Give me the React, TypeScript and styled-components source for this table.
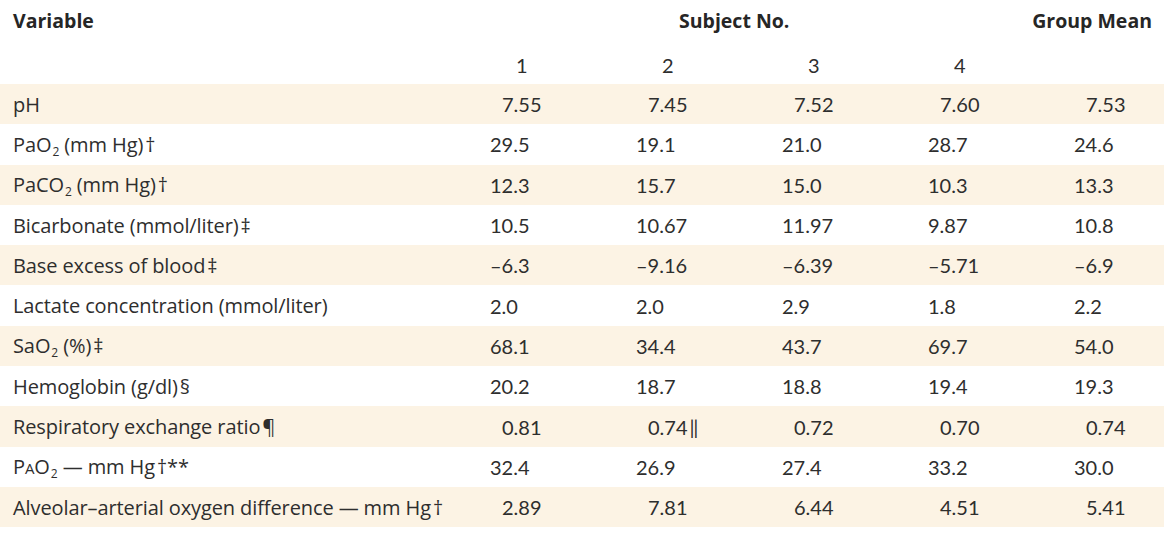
import React from 'react'
import styled, { createGlobalStyle, css } from 'styled-components'

const GlobalStyle = createGlobalStyle`
  html, body {
    margin: 0;
    padding: 0;
    background: #ffffff;
  }
  body {
    font-family: Lato, "Open Sans", "Liberation Sans", sans-serif;
    color: #2e2e2e;
  }
`

type Row = {
  label: React.ReactNode
  values: React.ReactNode[]
  indent?: boolean
}

const Sub = styled.span`
  font-size: 12px;
  position: relative;
  top: 4px;
  line-height: 0;
  margin-left: 1px;
`

const SmallCap = styled.span`
  font-size: 15px;
`

const Mark = styled.span`
  font-size: 20px;
  margin-left: 2px;
`

const rows: Row[] = [
  { label: 'pH', values: ['7.55', '7.45', '7.52', '7.60', '7.53'], indent: true },
  {
    label: <>PaO<Sub>2</Sub> (mm Hg)<Mark>†</Mark></>,
    values: ['29.5', '19.1', '21.0', '28.7', '24.6'],
  },
  {
    label: <>PaCO<Sub>2</Sub> (mm Hg)<Mark>†</Mark></>,
    values: ['12.3', '15.7', '15.0', '10.3', '13.3'],
  },
  {
    label: <>Bicarbonate (mmol/liter)<Mark>‡</Mark></>,
    values: ['10.5', '10.67', '11.97', '9.87', '10.8'],
  },
  {
    label: <>Base excess of blood<Mark>‡</Mark></>,
    values: ['–6.3', '–9.16', '–6.39', '–5.71', '–6.9'],
  },
  {
    label: 'Lactate concentration (mmol/liter)',
    values: ['2.0', '2.0', '2.9', '1.8', '2.2'],
  },
  {
    label: <>SaO<Sub>2</Sub> (%)<Mark>‡</Mark></>,
    values: ['68.1', '34.4', '43.7', '69.7', '54.0'],
  },
  {
    label: <>Hemoglobin (g/dl)<Mark>§</Mark></>,
    values: ['20.2', '18.7', '18.8', '19.4', '19.3'],
  },
  {
    label: <>Respiratory exchange ratio<Mark>¶</Mark></>,
    values: ['0.81', <>0.74<Mark>‖</Mark></>, '0.72', '0.70', '0.74'],
    indent: true,
  },
  {
    label: <>P<SmallCap>A</SmallCap>O<Sub>2</Sub> — mm Hg<Mark>†**</Mark></>,
    values: ['32.4', '26.9', '27.4', '33.2', '30.0'],
  },
  {
    label: <>Alveolar–arterial oxygen difference — mm Hg<Mark>†</Mark></>,
    values: ['2.89', '7.81', '6.44', '4.51', '5.41'],
    indent: true,
  },
]

const App: React.FC = () => {
  return (
    <>
      <GlobalStyle />
      <Table>
        <TopHead>
          <HeadLabel>Variable</HeadLabel>
          <SpanHead>Subject No.</SpanHead>
          <MeanHead>Group Mean</MeanHead>
        </TopHead>
        <SubHead>
          <span />
          {[1, 2, 3, 4].map((n) => (
            <Number key={n}>{n}</Number>
          ))}
          <span />
        </SubHead>
        {rows.map((row, i) => (
          <BodyRow key={i} $striped={i % 2 === 0}>
            <Label>{row.label}</Label>
            {row.values.map((v, j) => (
              <Value key={j} $indent={row.indent}>
                {v}
              </Value>
            ))}
          </BodyRow>
        ))}
      </Table>
    </>
  )
}

const columns = css`
  display: grid;
  grid-template-columns: 490px repeat(4, 146px) minmax(0, 1fr);
  grid-template-rows: 100%;
  align-items: center;
`

const Table = styled.div`
  width: 1164px;
  font-size: 20px;
`

const TopHead = styled.div`
  ${columns};
  height: 40px;
  font-family: "Open Sans", Lato, sans-serif;
  font-weight: 700;
  font-size: 19.5px;
  color: #262626;
`

const HeadLabel = styled.div`
  grid-row: 1;
  padding-left: 13px;
`

const SpanHead = styled.div`
  grid-row: 1;
  grid-column: 2 / 6;
  justify-self: start;
  margin-left: 189px;
  white-space: nowrap;
`

const MeanHead = styled.div`
  grid-row: 1;
  grid-column: 5 / 7;
  justify-self: end;
  margin-right: 12px;
  white-space: nowrap;
`

const SubHead = styled.div`
  ${columns};
  height: 44px;
  padding-top: 6px;
  box-sizing: border-box;
`

const Number = styled.div`
  padding-left: 26px;
`

const BodyRow = styled.div<{ $striped?: boolean }>`
  ${columns};
  height: 40.3px;
  background: ${(p) => (p.$striped ? '#fcf3e4' : '#ffffff')};
`

const Label = styled.div`
  padding-left: 13px;
  white-space: nowrap;
  font-family: "Open Sans", Lato, sans-serif;
  font-size: 20px;
  letter-spacing: -0.1px;
`

const Value = styled.div<{ $indent?: boolean }>`
  padding-left: ${(p) => (p.$indent ? '12px' : '0')};
  white-space: nowrap;
`

export default App
